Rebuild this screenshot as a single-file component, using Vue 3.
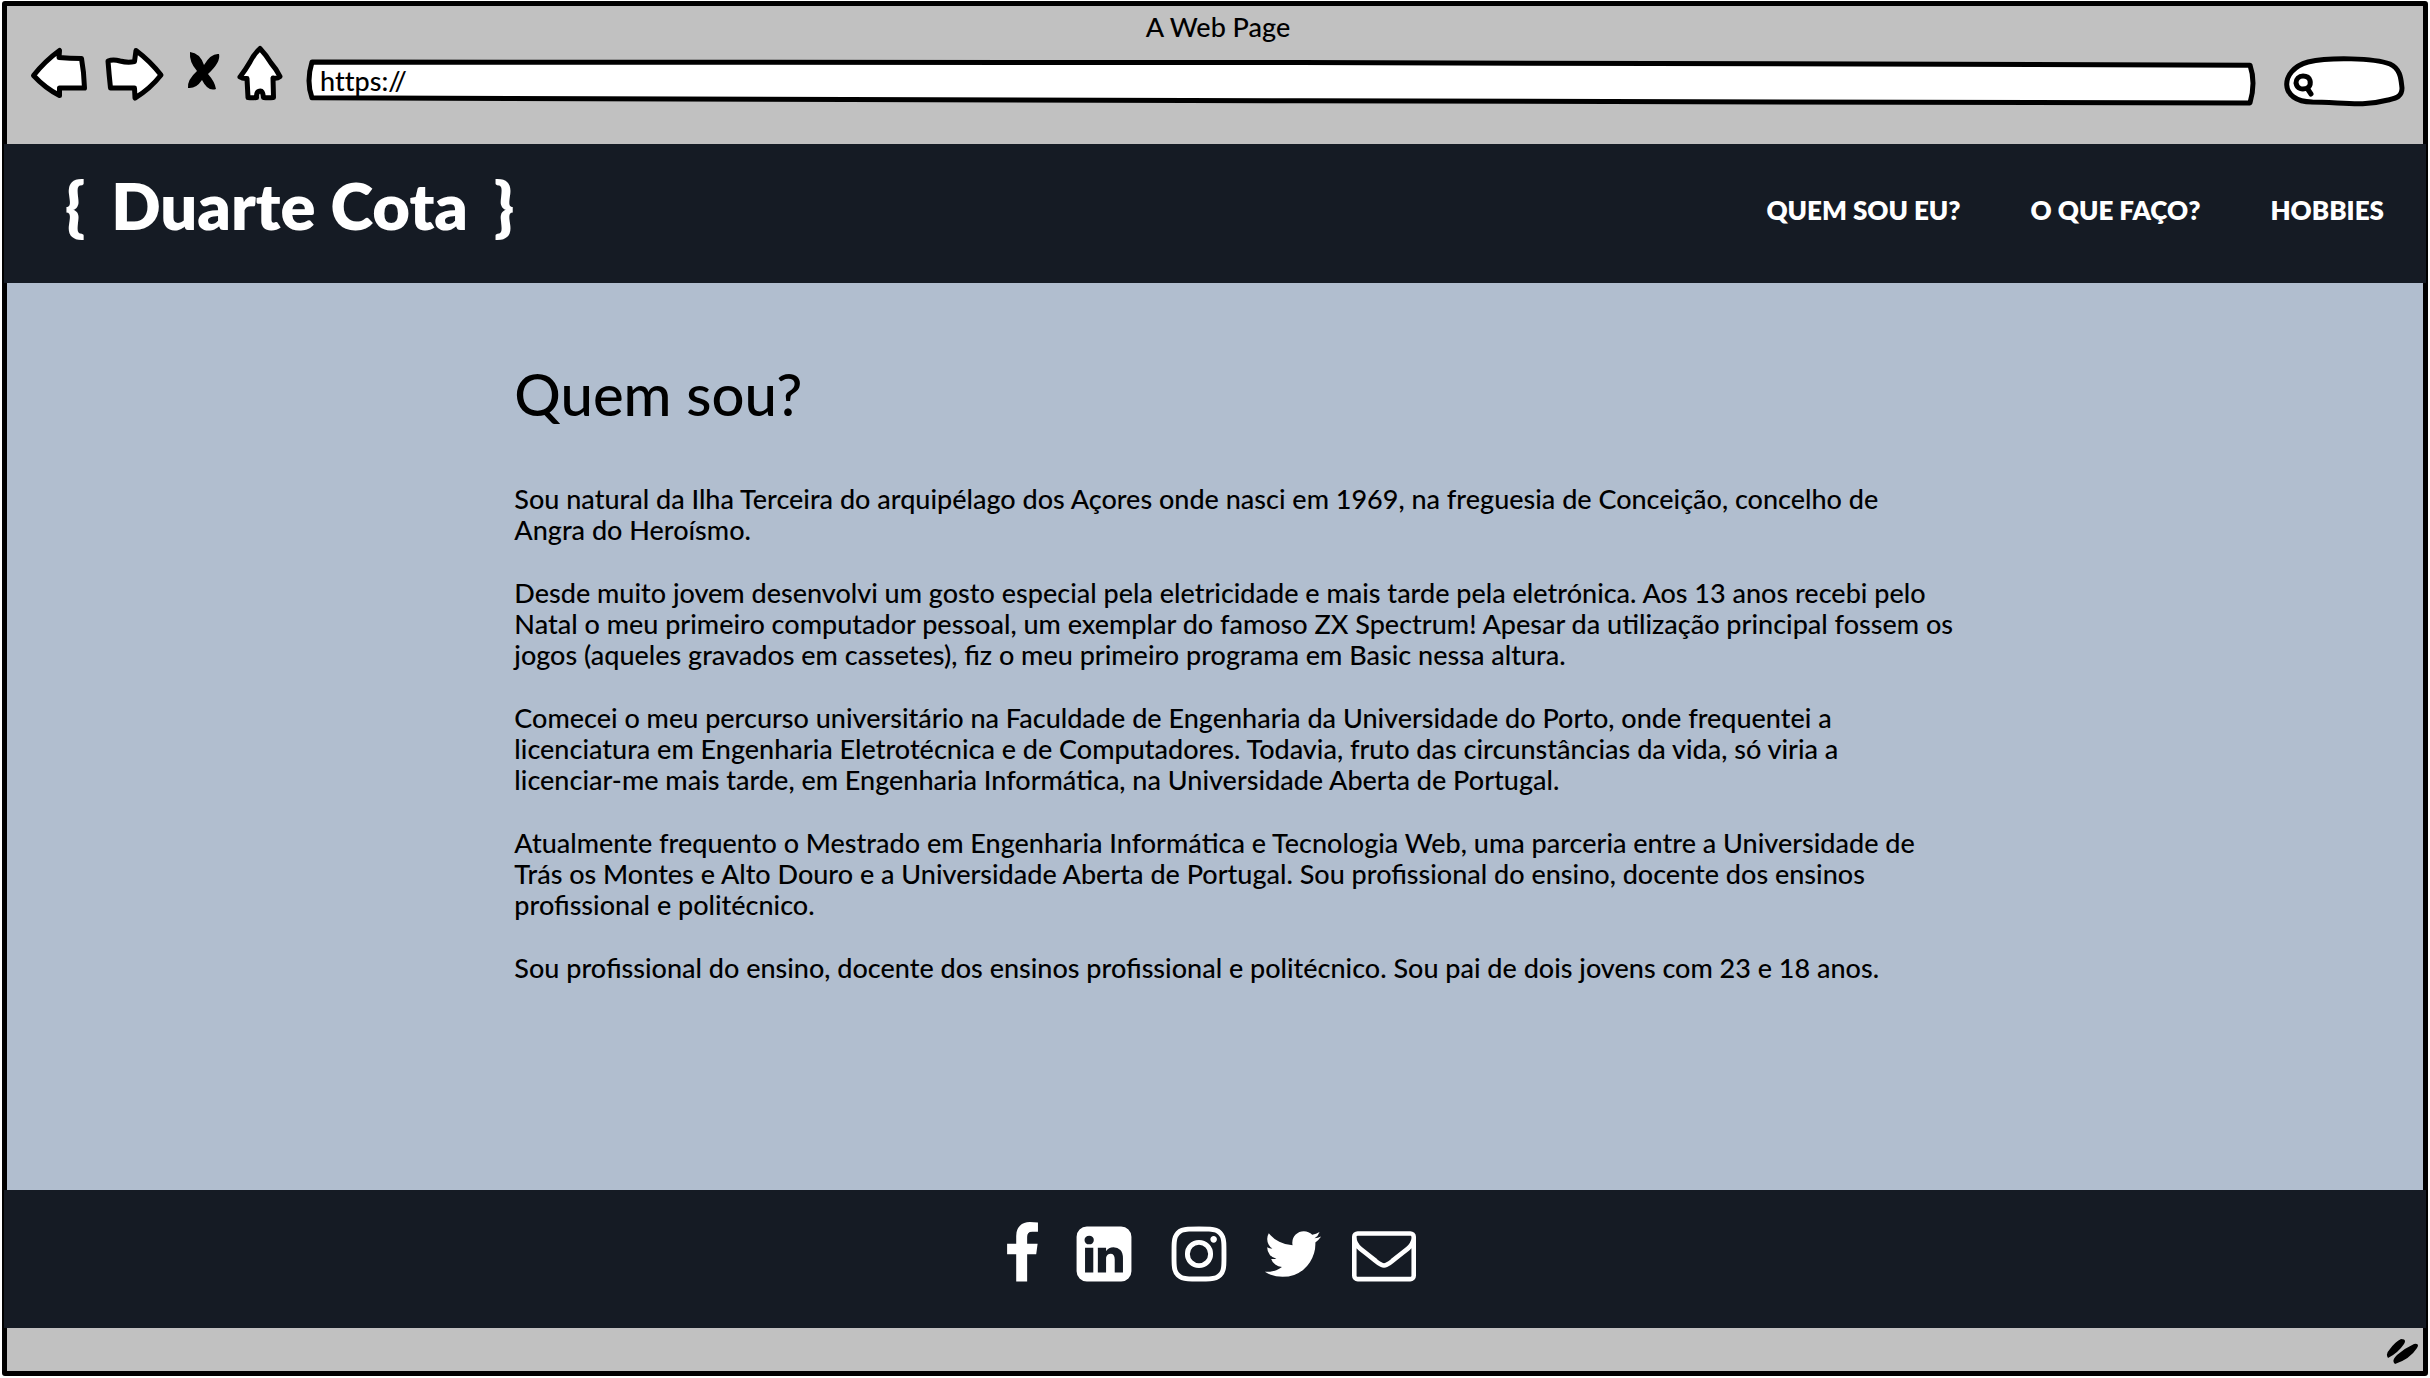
<script setup>
import { ref } from 'vue'

const address = ref('https://')
const query = ref('')

const links = [
  { label: 'QUEM SOU EU?', href: '#quem-sou' },
  { label: 'O QUE FAÇO?', href: '#o-que-faco' },
  { label: 'HOBBIES', href: '#hobbies' },
]

const paragraphs = [
  [
    'Sou natural da Ilha Terceira do arquipélago dos Açores onde nasci em 1969, na freguesia de Conceição, concelho de',
    'Angra do Heroísmo.',
  ],
  [
    'Desde muito jovem desenvolvi um gosto especial pela eletricidade e mais tarde pela eletrónica. Aos 13 anos recebi pelo',
    'Natal o meu primeiro computador pessoal, um exemplar do famoso ZX Spectrum! Apesar da utilização principal fossem os',
    'jogos (aqueles gravados em cassetes), fiz o meu primeiro programa em Basic nessa altura.',
  ],
  [
    'Comecei o meu percurso universitário na Faculdade de Engenharia da Universidade do Porto, onde frequentei a',
    'licenciatura em Engenharia Eletrotécnica e de Computadores. Todavia, fruto das circunstâncias da vida, só viria a',
    'licenciar-me mais tarde, em Engenharia Informática, na Universidade Aberta de Portugal.',
  ],
  [
    'Atualmente frequento o Mestrado em Engenharia Informática e Tecnologia Web, uma parceria entre a Universidade de',
    'Trás os Montes e Alto Douro e a Universidade Aberta de Portugal. Sou profissional do ensino, docente dos ensinos',
    'profissional e politécnico.',
  ],
  ['Sou profissional do ensino, docente dos ensinos profissional e politécnico. Sou pai de dois jovens com 23 e 18 anos.'],
]

const social = [
  {
    name: 'Facebook',
    d: 'M1343 12v264h-157q-86 0-116 36t-30 108v189h293l-39 296h-254v759h-306v-759h-255v-296h255v-218q0-186 104-288.500t277-102.500q147 0 228 12z',
  },
  {
    name: 'LinkedIn',
    d: 'M365 1414h231v-694h-231v694zm246-908q-1-52-36-86t-93-34-94.500 34-36.500 86q0 51 35.500 85.500t92.500 34.500h1q59 0 95-34.500t36-85.500zm585 908h231v-398q0-154-73-233t-193-79q-136 0-209 117h2v-101h-231q3 66 0 694h231v-388q0-38 7-56 15-35 45-59.500t74-24.500q116 0 116 157v371zm468-998v960q0 119-84.500 203.500t-203.500 84.500h-960q-119 0-203.500-84.500t-84.500-203.500v-960q0-119 84.500-203.500t203.500-84.500h960q119 0 203.500 84.500t84.500 203.500z',
  },
  {
    name: 'Instagram',
    d: 'M1152 896q0-106-75-181t-181-75-181 75-75 181 75 181 181 75 181-75 75-181zm138 0q0 164-115 279t-279 115-279-115-115-279 115-279 279-115 279 115 115 279zm108-410q0 38-27 65t-65 27-65-27-27-65 27-65 65-27 65 27 27 65zm-502-220q-7 0-76.500-.5t-105.500 0-96.500 3-103 10-71.500 18.500q-50 20-88 58t-58 88q-11 29-18.500 71.500t-10 103-3 96.500 0 105.500.5 76.500-.5 76.500 0 105.500 3 96.500 10 103 18.500 71.500q20 50 58 88t88 58q29 11 71.500 18.500t103 10 96.500 3 105.500 0 76.500-.5 76.500.5 105.500 0 96.500-3 103-10 71.500-18.500q50-20 88-58t58-88q11-29 18.500-71.500t10-103 3-96.500 0-105.500-.5-76.500.5-76.500 0-105.500-3-96.500-10-103-18.500-71.500q-20-50-58-88t-88-58q-29-11-71.500-18.500t-103-10-96.500-3-105.500 0-76.500.5zm768 630q0 229-5 317-10 208-124 322t-322 124q-88 5-317 5t-317-5q-208-10-322-124t-124-322q-5-88-5-317t5-317q10-208 124-322t322-124q88-5 317-5t317 5q208 10 322 124t124 322q5 88 5 317z',
  },
  {
    name: 'Twitter',
    d: 'M1684 408q-67 98-162 167 1 14 1 42 0 130-38 259.500t-115.500 248.500-184.500 210.500-258 146-323 54.500q-271 0-496-145 35 4 78 4 225 0 401-138-105-2-188-64.500t-114-159.500q33 5 61 5 43 0 85-11-112-23-185.500-111.500t-73.500-205.500v-4q68 38 146 41-66-44-105-115t-39-154q0-88 44-163 121 149 294.500 238.500t371.500 99.500q-8-38-8-74 0-134 94.500-228.500t228.500-94.500q140 0 236 102 109-21 205-78-37 115-142 178 93-10 186-50z',
  },
  {
    name: 'Email',
    d: 'M1664 1504v-768q-32 36-69 66-268 206-426 338-51 43-83 67t-86.500 48.500-102.500 24.500h-2q-48 0-102.500-24.500t-86.500-48.500-83-67q-158-132-426-338-37-30-69-66v768q0 13 9.500 22.500t22.500 9.500h1472q13 0 22.500-9.500t9.500-22.500zm0-1051v-24.500l-.5-13-3-12.500-5.500-9-9-7.500-14-2.500h-1472q-13 0-22.500 9.500t-9.500 22.500q0 168 147 284 193 152 401 317 6 5 35 29.500t46 37.500 44.500 31.500 50.500 27.500 43 9h2q20 0 43-9t50.500-27.500 44.500-31.500 46-37.500 35-29.500q208-165 401-317 54-43 100.500-115.500t46.500-131.500zm128-37v1088q0 66-47 113t-113 47h-1472q-66 0-113-47t-47-113v-1088q0-66 47-113t113-47h1472q66 0 113 47t47 113z',
  },
]
</script>

<template>
  <div class="window">
    <div class="chrome">
      <div class="chrome-title">A Web Page</div>
      <div class="toolbar">
        <button class="tool" type="button" aria-label="Back">
          <svg class="sketch" width="60" height="56" viewBox="30 45 60 56">
            <path d="M33.500 75.500Q45 61 59.500 50.500L59 57.500Q70 58.500 81.500 58.500Q84 72 84.500 88Q72 88 59.500 88L59.500 95.500Q45 88 33.500 75.500Z" />
          </svg>
        </button>
        <button class="tool" type="button" aria-label="Forward">
          <svg class="sketch" width="60" height="56" viewBox="104 45 60 56">
            <path d="M108 61Q113 59 120 61Q128 63 134.500 61.500L136 50.500Q150 61 161 75Q150 89 135 98L134.500 88Q122 88 110.500 88Q109 74 108 61Z" />
          </svg>
        </button>
        <button class="tool" type="button" aria-label="Stop">
          <svg width="46" height="56" viewBox="178 45 46 56">
            <path d="M190 52Q200 53 204 65Q211 53 219 54Q221 62 208 74Q215 82 216 89Q208 92 202 80Q196 89 188 88Q187 80 197 71Q189 62 190 52Z" />
          </svg>
        </button>
        <button class="tool" type="button" aria-label="Home">
          <svg class="sketch" width="46" height="56" viewBox="238 45 46 56">
            <path d="M260 48.500Q267 56 271 63Q277 70 280 76.500Q277 79 273 78L273.500 97.500Q268 98 263.500 97.500Q263 91 260.500 91Q256 91 256.500 97.500Q252 98 248 97.500L247 78.500Q243 79 240 77Q246 69 250 62Q254 54 260 48.500Z" />
          </svg>
        </button>
        <div class="address">
          <svg class="sketch outline" viewBox="306 60 1952 47" preserveAspectRatio="none" aria-hidden="true">
            <path d="M312 63L1300 63.500L2250 66Q2256 83 2250 103L1300 101L312 98Q306 82 312 63Z" />
          </svg>
          <input v-model="address" class="field" type="text" aria-label="Address" />
        </div>
        <div class="search">
          <svg class="sketch outline" viewBox="2284 56 122 52" aria-hidden="true">
            <path d="M2312 102C2279 102 2279 70 2308 62C2330 57 2374 58 2390 64C2401 69 2401 80 2402 88C2402 97 2396 98 2388 100C2362 107 2342 102 2310 102Z" />
            <path d="M2303 76C2311 76 2312 84 2308 88C2302 90 2297 89 2296 83C2296 79 2299 76 2303 76ZM2307 88L2311 94" />
          </svg>
          <input v-model="query" class="field" type="search" aria-label="Search" />
        </div>
      </div>
    </div>

    <header class="site-header">
      <a class="brand" href="#"><span>{</span><span>Duarte Cota</span><span>}</span></a>
      <nav class="nav">
        <a v-for="link in links" :key="link.href" class="nav-link" :href="link.href">{{ link.label }}</a>
      </nav>
    </header>

    <main id="quem-sou" class="content">
      <h1 class="heading">Quem sou?</h1>
      <p v-for="(lines, p) in paragraphs" :key="p" class="paragraph">
        <template v-for="(line, i) in lines" :key="i"><br v-if="i" />{{ line }}</template>
      </p>
    </main>

    <footer class="site-footer">
      <a v-for="item in social" :key="item.name" class="social" href="#" :aria-label="item.name">
        <svg width="64" height="64" viewBox="0 0 1792 1792"><path :d="item.d" fill="#fff" /></svg>
      </a>
    </footer>

    <div class="status">
      <svg width="34" height="28" viewBox="2386 1339 34 28" aria-hidden="true">
        <path d="M2401 1340Q2407 1340 2404 1345Q2398 1354 2388 1359Q2385 1355 2390 1350Q2395 1343 2401 1340ZM2414 1345Q2420 1344 2417 1349Q2410 1360 2395 1365Q2391 1362 2397 1356Q2405 1349 2414 1345Z" />
      </svg>
    </div>
  </div>
</template>

<style>
body {
  margin: 0;
  background: #fff;
}
</style>

<style scoped>
.window {
  box-sizing: border-box;
  display: flex;
  flex-direction: column;
  min-height: calc(100vh - 3px);
  margin: 1px 2px 2px;
  border: 5px solid #000;
  border-radius: 3px;
  background: #c1c1c1;
  color: #000;
  font-family: Lato, "Noto Sans", sans-serif;
  font-size: 27px;
  font-weight: 500;
  font-variant-ligatures: none;
}

.chrome {
  box-sizing: border-box;
  min-height: 138px;
  padding: 3px 17px 0 23px;
}

.chrome-title {
  padding-bottom: 1px;
  line-height: 35px;
  text-align: center;
}

.toolbar {
  display: flex;
  align-items: flex-start;
  gap: 14px;
}

.tool {
  padding: 0;
  border: 0;
  background: none;
}

.tool svg,
.social svg {
  display: block;
}

.sketch {
  fill: #fff;
  stroke: #000;
  stroke-width: 5;
  stroke-linejoin: round;
  stroke-linecap: round;
  overflow: visible;
}

.sketch path {
  vector-effect: non-scaling-stroke;
}

.address,
.search {
  position: relative;
  display: flex;
  margin-top: 14px;
  height: 48px;
}

.address {
  flex: 1;
  margin-left: 8px;
}

.search {
  width: 122px;
  margin: 11px 0 0 12px;
  height: 52px;
}

.outline {
  position: absolute;
  inset: 0;
  width: 100%;
  height: 100%;
}

.field {
  position: relative;
  box-sizing: border-box;
  width: 100%;
  height: 42px;
  padding: 0 14px;
  border: 0;
  outline: 0;
  background: none;
  color: inherit;
  font: inherit;
}

.search .field {
  padding-left: 32px;
}

.site-header {
  display: flex;
  align-items: center;
  justify-content: space-between;
  min-height: 139px;
  margin: 0 -3px;
  padding: 0 42px 0 61px;
  box-sizing: border-box;
  background: #151b24;
}

.brand {
  display: flex;
  gap: 26px;
  padding-bottom: 18px;
  color: #fff;
  font-size: 65px;
  font-weight: 800;
  line-height: 72px;
  text-decoration: none;
}

.nav {
  display: flex;
  gap: 70px;
  padding-bottom: 8px;
}

.nav-link {
  color: #fff;
  font-size: 26px;
  font-weight: 800;
  line-height: 32px;
  text-decoration: none;
}

.content {
  flex: 1;
  padding: 76px 0 80px 21%;
  background: #b1becf;
}

.heading {
  margin: 0 0 54px;
  font-size: 58px;
  font-weight: 500;
  line-height: 70px;
}

.paragraph {
  margin: 0 0 32px;
  font-variant-ligatures: common-ligatures;
  line-height: 31px;
  white-space: nowrap;
}

.site-footer {
  display: grid;
  grid-template-columns: 72px 92px 98px 90px 92px;
  justify-content: center;
  justify-items: center;
  align-items: start;
  box-sizing: border-box;
  min-height: 138px;
  margin: 0 -3px;
  padding: 32px 14px 0 0;
  background: #151b24;
}

.status {
  display: flex;
  align-items: center;
  justify-content: flex-end;
  box-sizing: border-box;
  height: 43px;
  padding: 5px 3px 0 0;
}
</style>
